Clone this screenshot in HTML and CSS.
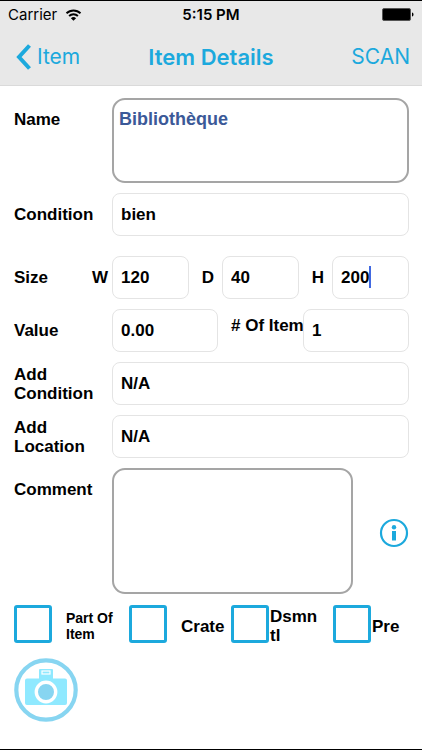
FILE: index.html
```html
<!DOCTYPE html>
<html lang="en">
<head>
  <meta charset="UTF-8" />
  <meta name="viewport" content="width=device-width, initial-scale=1.0" />
  <title>Item Details</title>
  <link rel="stylesheet" href="styles.css">
</head>
<body>
  <header class="top">
    <div class="status">
      <span class="carrier">Carrier
        <svg width="17" height="12" viewBox="0 0 16 12" aria-hidden="true">
          <path d="M1 4.3a10 10 0 0 1 14 0M3.6 7a6.3 6.3 0 0 1 8.8 0" fill="none" stroke="#000" stroke-width="1.9"/>
          <path d="M8 11.8 5.4 9.2a3.7 3.7 0 0 1 5.2 0z"/>
        </svg>
      </span>
      <span class="time">5:15 PM</span>
      <svg class="battery" width="32" height="13" viewBox="0 0 32 13" aria-hidden="true">
        <rect x="0.5" y="0.5" width="28" height="12" rx="1.5" stroke="#555"/>
        <path d="M30 4.5c2 .6 2 3.4 0 4z"/>
      </svg>
    </div>
    <nav class="navbar">
      <a class="back" href="#">
        <svg width="15" height="26" viewBox="0 0 15 26" aria-hidden="true">
          <path d="M13.5 1.5 3 13 13.5 24.5" fill="none" stroke="#1ca9dd" stroke-width="4"/>
        </svg>
        Item
      </a>
      <h1>Item Details</h1>
      <button type="button" class="scan">SCAN</button>
    </nav>
  </header>

  <form class="details">
    <div class="row top-row">
      <label for="name">Name</label>
      <textarea id="name" class="name">Bibliothèque</textarea>
    </div>

    <div class="row condition-row">
      <label for="condition">Condition</label>
      <input type="text" id="condition" value="bien">
    </div>

    <div class="row">
      <div class="size-label"><span>Size</span><label for="width">W</label></div>
      <div class="sizes">
        <input type="text" id="width" value="120">
        <label for="depth">D</label>
        <input type="text" id="depth" value="40">
        <label for="height">H</label>
        <div class="active">
          <input type="text" id="height" value="200">
          <span class="caret"></span>
        </div>
      </div>
    </div>

    <div class="row">
      <label for="value">Value</label>
      <div class="values">
        <input type="text" id="value" value="0.00">
        <label for="count"># Of Item</label>
        <input type="text" id="count" value="1">
      </div>
    </div>

    <div class="row">
      <label for="addCondition">Add Condition</label>
      <input type="text" id="addCondition" value="N/A">
    </div>

    <div class="row">
      <label for="addLocation">Add Location</label>
      <input type="text" id="addLocation" value="N/A">
    </div>

    <div class="row top-row">
      <label for="comment">Comment</label>
      <div class="comment-box">
        <textarea id="comment" class="comment"></textarea>
        <button type="button" class="info" aria-label="Info">
          <svg width="30" height="30" viewBox="0 0 30 30">
            <circle cx="15" cy="15" r="13" fill="none" stroke="#1ca9dd" stroke-width="2.2"/>
            <circle cx="15" cy="9.3" r="2.2" fill="#1ca9dd"/>
            <path d="M13 13h4v9.5h-4z" fill="#1ca9dd"/>
          </svg>
        </button>
      </div>
    </div>

    <div class="checks">
      <label class="check small"><input type="checkbox"><span>Part Of Item</span></label>
      <label class="check"><input type="checkbox"><span>Crate</span></label>
      <label class="check tight"><input type="checkbox"><span>Dsmntl</span></label>
      <label class="check tight"><input type="checkbox"><span>Pre</span></label>
    </div>

    <button type="button" class="camera" aria-label="Camera">
      <svg width="64" height="64" viewBox="0 0 64 64">
        <circle cx="32" cy="32" r="29.7" fill="#fff" stroke="#87d5f1" stroke-width="4.2"/>
        <path d="M13 20.5h12V12a1 1 0 0 1 1-1h12a1 1 0 0 1 1 1v8.5h12a2 2 0 0 1 2 2V45a2 2 0 0 1-2 2H13a2 2 0 0 1-2-2V22.5a2 2 0 0 1 2-2z" fill="#8fe9ff"/>
        <rect x="28" y="13" width="8" height="3" fill="#8fe9ff" stroke="#fff" stroke-width="1.2"/>
        <circle cx="32" cy="34" r="9.7" fill="#87d5f1" stroke="#fff" stroke-width="3.4"/>
      </svg>
    </button>
  </form>
</body>
</html>
```
FILE: styles.css
```css
* {
  box-sizing: border-box;
}

body {
  margin: 0;
  min-height: 100vh;
  border-top: 1px solid #000;
  border-bottom: 1px solid #000;
  background-color: #fff;
  color: #000;
  font-family: "Liberation Sans", Arial, sans-serif;
  font-size: 17px;
  font-weight: bold;
  line-height: 19px;
}

input,
textarea,
button {
  margin: 0;
  font: inherit;
  color: inherit;
}

button {
  padding: 0;
  border: none;
  background: none;
  cursor: pointer;
}

svg {
  display: block;
}

.top {
  background-color: #e8e8e8;
  border-bottom: 1px solid #dadada;
  font-family: Inter, sans-serif;
  font-weight: 400;
}

.status,
.navbar {
  display: grid;
  grid-template-columns: 1fr auto 1fr;
  align-items: center;
}

.status {
  height: 27px;
  padding: 0 8px;
  font-size: 15px;
}

.carrier {
  display: flex;
  align-items: center;
  gap: 8px;
}

.time {
  font-weight: 600;
}

.battery {
  justify-self: end;
}

.navbar {
  height: 57px;
  padding: 0 12px;
  color: #1ca9dd;
  font-size: 21px;
  line-height: 28px;
}

.back {
  display: flex;
  align-items: center;
  gap: 6px;
  padding-left: 4px;
  color: inherit;
  text-decoration: none;
}

h1 {
  margin: 0;
  font-size: 22px;
  font-weight: 600;
}

.scan {
  justify-self: end;
}

.details {
  display: flex;
  flex-direction: column;
  gap: 10px;
  padding: 12px 13px 0 14px;
}

.row {
  display: grid;
  grid-template-columns: 98px 1fr;
  align-items: center;
}

.top-row {
  align-items: start;
}

.top-row > label {
  padding-top: 12px;
}

.condition-row {
  margin-bottom: 10px;
}

input[type="text"] {
  width: 100%;
  height: 43px;
  padding: 0 8px;
  border: 1px solid #e4e4e4;
  border-radius: 8px;
  background-color: #fff;
}

textarea {
  display: block;
  width: 100%;
  padding: 10px 5px;
  border: 2px solid #a5a5a5;
  border-radius: 13px;
  background-color: #fff;
  resize: none;
}

.name {
  height: 85px;
  color: #3b5998;
  font-size: 18px;
}

.size-label {
  display: flex;
  justify-content: space-between;
  padding-right: 4px;
}

.sizes {
  display: grid;
  grid-template-columns: 1fr 33px 1fr 33px 1fr;
  align-items: center;
}

.sizes label {
  padding-right: 8px;
  text-align: right;
}

.active {
  position: relative;
}

.caret {
  position: absolute;
  top: 10px;
  left: 37px;
  width: 2px;
  height: 22px;
  background-color: #4169e1;
}

.values {
  display: grid;
  grid-template-columns: 1fr 85px 1fr;
  align-items: center;
}

.values label {
  padding: 0 0 10px 13px;
  white-space: nowrap;
}

.comment-box {
  display: grid;
  grid-template-columns: 1fr 56px;
  align-items: center;
}

.comment {
  height: 126px;
}

.info {
  justify-self: end;
  padding-top: 4px;
}

.checks {
  display: grid;
  grid-template-columns: 115px 102px 102px 1fr;
  margin-top: -2px;
}

.check {
  display: flex;
  align-items: center;
  gap: 14px;
}

.check span {
  padding-top: 5px;
}

.tight {
  gap: 1px;
}

.tight span {
  width: 50px;
  word-break: break-all;
}

.small {
  font-size: 14px;
  line-height: 16px;
}

.small span {
  width: 50px;
}

.check input {
  flex: none;
  width: 38px;
  height: 38px;
  appearance: none;
  border: 3px solid #1ca9dd;
  border-radius: 3px;
}

.check input:checked {
  background-color: #1ca9dd;
}

.camera {
  align-self: flex-start;
  margin-top: 3px;
}
```
